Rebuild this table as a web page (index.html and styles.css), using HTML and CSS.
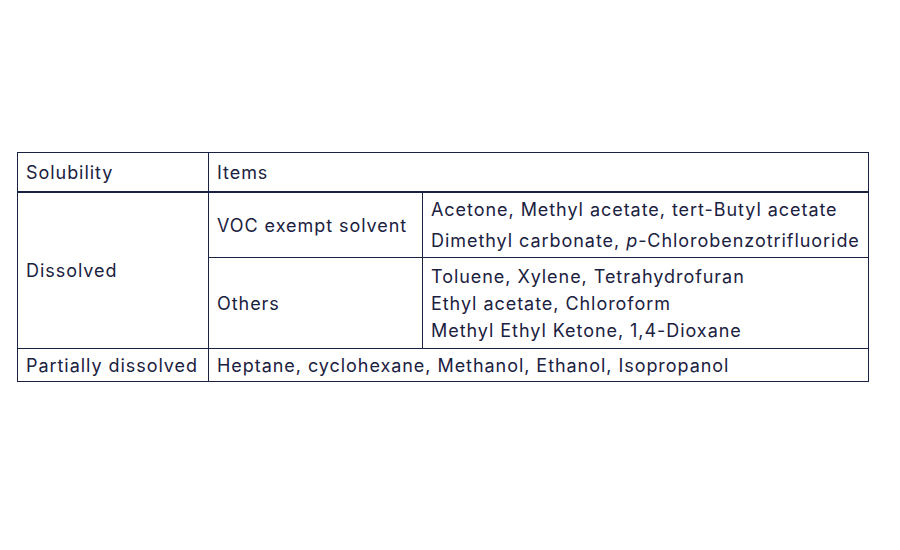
FILE: index.html
```html
<!DOCTYPE html>
<html>
<head>
<meta charset="utf-8">
<link rel="stylesheet" href="styles.css">
</head>
<body>
<div class="wrap">
<table class="sol">
  <colgroup>
    <col class="c1"><col class="c2"><col class="c3">
  </colgroup>
  <thead>
    <tr class="head"><th>Solubility</th><th colspan="2">Items</th></tr>
  </thead>
  <tbody>
    <tr class="voc">
      <td rowspan="2">Dissolved</td>
      <td>VOC exempt solvent</td>
      <td class="list l31"><div>Acetone, Methyl acetate, tert-Butyl acetate</div><div>Dimethyl carbonate, <i>p</i>-Chlorobenzotrifluoride</div></td>
    </tr>
    <tr class="oth">
      <td>Others</td>
      <td class="list l27"><div>Toluene, Xylene, Tetrahydrofuran</div><div>Ethyl acetate, Chloroform</div><div>Methyl Ethyl Ketone, 1,4-Dioxane</div></td>
    </tr>
    <tr class="part">
      <td>Partially dissolved</td>
      <td colspan="2">Heptane, cyclohexane, Methanol, Ethanol, Isopropanol</td>
    </tr>
  </tbody>
</table>
</div>
</body>
</html>
```
FILE: styles.css
```css
html, body { margin: 0; padding: 0; background: #fff; }
.wrap { padding: 152px 0 0 17px; }
.sol {
  border-collapse: collapse;
  width: 851px;
  table-layout: fixed;
  font-family: Inter, "Noto Sans", sans-serif;
  font-size: 18px;
  letter-spacing: 0.95px;
  color: #1b2140;
}
.c1 { width: 191px; }
.c2 { width: 214px; }
.c3 { width: 446px; }
.sol th, .sol td {
  border: 1px solid #1b2140;
  padding: 0 8px;
  text-align: left;
  font-weight: 400;
  vertical-align: middle;
  line-height: 27px;
  white-space: nowrap;
}
.head th { height: 38px; padding: 0 8px; border-bottom: 2px solid #1b2140; }
.voc td { height: 64px; }
.oth td { height: 90px; }
.part td { height: 32px; }
.l31 { line-height: 31px !important; }
.l27 { line-height: 27px; }
.list i { font-style: italic; }
```
